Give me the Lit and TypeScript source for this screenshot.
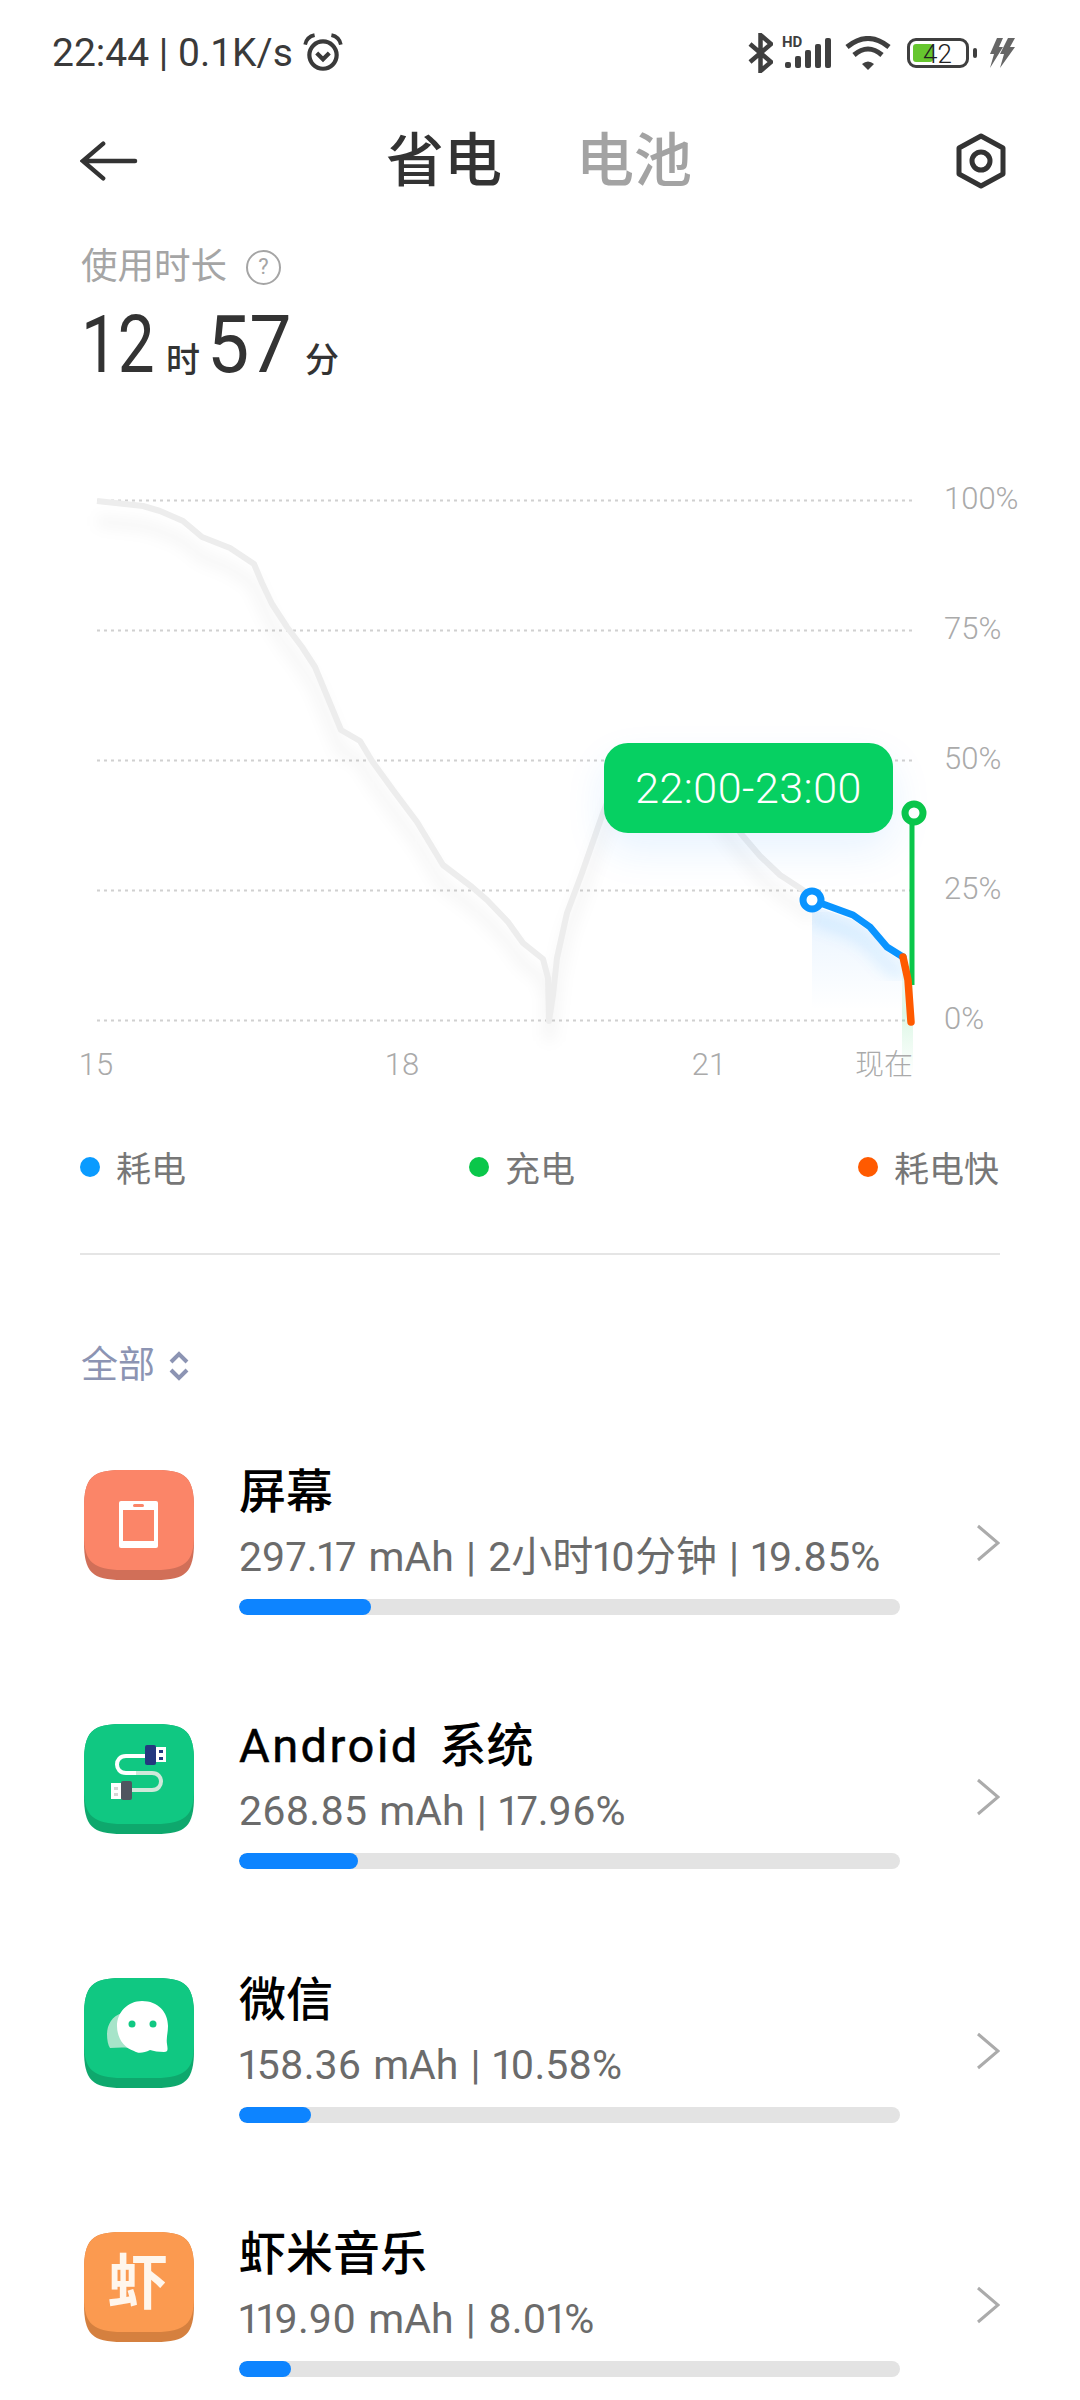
import { LitElement, css, html, svg } from "lit";
import { customElement } from "lit/decorators.js";

type Row = {
  name: unknown;
  detail: string;
  fill: number;
  icon: unknown;
};

const GREY_LINE =
  "M97 501 L143 506 L160 511 L183 521 L202 537 L230 548 L254 564 L262 583 L272 604 L287 627 L302 647 L315 667 L341 730 L360 741 L372 761 L393 790 L417 822 L443 865 L472 887 L487 900 L508 922 L523 943 L543 959 L548 978 L549 1021 L553 995 L557 958 L567 913 L582 873 L603 813 L620 770 L700 780 L742 835 L760 856 L780 875 L803 890 L812 900";
const BLUE_LINE = "M812 900 L853 915 L870 927 L887 947 L903 957";
const ORANGE_LINE = "M903 957 L908 980 L911 1022";

const GRID = [
  { y: 500.5, label: "100%" },
  { y: 630.5, label: "75%" },
  { y: 760.5, label: "50%" },
  { y: 890.5, label: "25%" },
  { y: 1020.5, label: "0%" },
];

const tile = (top: string, base: string, content: unknown) => html`
  <svg class="tile" viewBox="0 0 110 110">
    <path
      fill=${base}
      d="M0 38C0 8 8 0 38 0H72C102 0 110 8 110 38V72C110 102 102 110 72 110H38C8 110 0 102 0 72Z"
    />
    <path
      fill=${top}
      d="M0 38C0 8 8 0 38 0H72C102 0 110 8 110 38V66C110 92 100 100 72 100H38C10 100 0 92 0 66Z"
    />
    ${content}
  </svg>
`;

const ROWS: Row[] = [
  {
    name: "屏幕",
    detail: "297.17 mAh | 2小时10分钟 | 19.85%",
    fill: 132,
    icon: tile(
      "#fb8568",
      "#d16f58",
      svg`<rect x="35" y="31" width="39" height="47" rx="2" fill="#fff" />
        <rect x="39" y="40" width="31" height="31" fill="#fb8568" />
        <rect x="49" y="34" width="11" height="3" rx="1.5" fill="#fb8568" />`
    ),
  },
  {
    name: html`<span class="latin">Android</span> 系统`,
    detail: "268.85 mAh | 17.96%",
    fill: 119,
    icon: tile(
      "#10c882",
      "#0ea86d",
      svg`<path d="M62 32H42C30 32 30 49 42 49H52" fill="none" stroke="#fff" stroke-width="4" />
        <path d="M52 49H68C80 49 80 66 68 66H47" fill="none" stroke="#cfe8da" stroke-width="4" />
        <rect x="72" y="23" width="10" height="15" fill="#fff" />
        <rect x="61" y="21" width="11" height="20" rx="2" fill="#23397f" />
        <rect x="75" y="26" width="4" height="3" fill="#23397f" />
        <rect x="75" y="33" width="4" height="3" fill="#23397f" />
        <rect x="27" y="59" width="10" height="16" fill="#fff" />
        <rect x="37" y="57" width="11" height="19" rx="2" fill="#4f5560" />
        <rect x="30" y="63" width="4" height="3" fill="#d5d5d5" />
        <rect x="30" y="69" width="4" height="3" fill="#d5d5d5" />`
    ),
  },
  {
    name: "微信",
    detail: "158.36 mAh | 10.58%",
    fill: 72,
    icon: tile(
      "#10c882",
      "#0ea86d",
      svg`<path d="M38 35C28 38 23 47 23 56C23 62 24 67 26 70C32 70 38 69 44 70L56 72Z" fill="#a6e4c9" />
        <path d="M58 23C74 23 84 34 84 48C84 55 82 60 83 66C84 72 84 74 80 74C74 74 70 73 66 72C60 75 54 76 50 73C40 70 33 60 33 48C33 34 44 23 58 23Z" fill="#fff" />
        <circle cx="48" cy="46" r="3.5" fill="#10c882" />
        <circle cx="69" cy="46" r="3.5" fill="#10c882" />`
    ),
  },
  {
    name: "虾米音乐",
    detail: "119.90 mAh | 8.01%",
    fill: 52,
    icon: tile(
      "#fb9a50",
      "#d5803f",
      svg`<text x="54" y="72" text-anchor="middle" class="tile-glyph">虾</text>`
    ),
  },
];

@customElement("app-root")
export class AppRoot extends LitElement {
  private renderStatus() {
    return html`
      <div class="status">
        <div class="status-left">
          <span>22:44 | 0.1K/s</span>
          <svg class="alarm" viewBox="0 0 40 38" fill="none" stroke="#3a3a3a">
            <circle cx="20" cy="21" r="13" stroke-width="4" />
            <path d="M3 11C4 6 7 3 12 2M37 11C36 6 33 3 28 2" stroke-width="3.5" />
            <path d="M14 19L20 25L26 19" stroke-width="4" />
          </svg>
        </div>
        <div class="status-right">
          <svg class="bt" viewBox="0 0 25 40" fill="none" stroke="#3f3f3f" stroke-width="4.5">
            <path d="M2 11L23 29L12.5 38V2L23 11L2 29" />
          </svg>
          <div class="signal">
            <span class="hd">HD</span>
            <svg viewBox="0 0 47 30" fill="#3f3f3f">
              <rect x="0" y="24" width="6" height="6" rx="2" />
              <rect x="10" y="18" width="6" height="12" rx="2" />
              <rect x="20" y="12" width="6" height="18" rx="2" />
              <rect x="30" y="6" width="6" height="24" rx="2" />
              <rect x="40" y="0" width="6" height="30" rx="2" />
            </svg>
          </div>
          <svg class="wifi" viewBox="0 0 46 34" fill="none" stroke="#3f3f3f" stroke-width="5">
            <path d="M2 11Q23 -6 44 11" />
            <path d="M9 19Q23 7 37 19" />
            <path d="M23 34L17 28Q23 23 29 28Z" fill="#3f3f3f" stroke="none" />
          </svg>
          <div class="battery">
            <div class="battery-fill"></div>
            <span class="battery-text">42</span>
            <div class="battery-nub"></div>
          </div>
          <svg class="flash" viewBox="0 0 28 30" fill="#666">
            <path d="M9 0H15L11 9H15L2 30L6 16H2Z" />
            <path d="M20 0H27L22 9H27L12 30L16 16H12Z" />
          </svg>
        </div>
      </div>
    `;
  }

  private renderChart() {
    return html`
      <div class="chart">
        <svg viewBox="0 470 1080 650" width="1080" height="650">
          <defs>
            <linearGradient id="blueArea" x1="0" y1="0" x2="0" y2="1">
              <stop offset="0" stop-color="#1a8cff" stop-opacity="0.1" />
              <stop offset="1" stop-color="#1a8cff" stop-opacity="0" />
            </linearGradient>
            <linearGradient id="greenArea" x1="0" y1="0" x2="0" y2="1">
              <stop offset="0" stop-color="#0ac74a" stop-opacity="0" />
              <stop offset="0.5" stop-color="#0ac74a" stop-opacity="0.14" />
              <stop offset="1" stop-color="#0ac74a" stop-opacity="0" />
            </linearGradient>
            <filter id="soft" x="-10%" y="-10%" width="120%" height="120%">
              <feGaussianBlur stdDeviation="7" />
            </filter>
            <clipPath id="nowClip">
              <rect x="812" y="880" width="101" height="200" />
            </clipPath>
          </defs>
          ${GRID.map(
            (g) => svg`
              <line x1="97" x2="913" y1=${g.y} y2=${g.y} class="grid-line" />
              <text x="944" y=${g.y + 8} class="axis">${g.label}</text>
            `
          )}
          <path d=${GREY_LINE} class="shade" transform="translate(0 20)" filter="url(#soft)" />
          <g clip-path="url(#nowClip)">
            <path d="M812 905L853 920L870 932L887 952L903 962L912 1000V1010H812Z" fill="url(#blueArea)" />
            <path d=${BLUE_LINE} class="blue-shade" transform="translate(0 18)" filter="url(#soft)" />
            <rect x="902" y="950" width="11" height="125" fill="url(#greenArea)" />
          </g>
          <path d=${GREY_LINE} class="line grey" />
          <path d=${BLUE_LINE} class="line blue" />
          <line x1="912" x2="912" y1="813" y2="985" class="charge" />
          <path d=${ORANGE_LINE} class="line orange" />
          <circle cx="812" cy="900" r="9" class="node blue-node" />
          <circle cx="914" cy="813" r="9" class="node green-node" />
          <text x="96" y="1075" text-anchor="middle" class="axis">15</text>
          <text x="402" y="1075" text-anchor="middle" class="axis">18</text>
          <text x="709" y="1075" text-anchor="middle" class="axis">21</text>
          <text x="913" y="1075" text-anchor="end" class="axis now">现在</text>
        </svg>
        <div class="tooltip">22:00-23:00</div>
      </div>
    `;
  }

  private renderRow(r: Row) {
    return html`
      <div class="row">
        ${r.icon}
        <div class="row-main">
          <div class="row-name">${r.name}</div>
          <div class="row-detail">${r.detail}</div>
          <div class="track">
            <div class="track-fill" style="width:${r.fill}px"></div>
          </div>
        </div>
        <svg class="chev" viewBox="0 0 24 38" fill="none" stroke="#ababab" stroke-width="3">
          <path d="M2 2L22 19L2 36" />
        </svg>
      </div>
    `;
  }

  render() {
    return html`
      ${this.renderStatus()}
      <header class="nav">
        <svg class="back" viewBox="0 0 60 40" fill="none" stroke="#333" stroke-width="4.5" stroke-linecap="round">
          <path d="M24 2L3 20L24 38M3 20H57" />
        </svg>
        <div class="tabs">
          <span class="tab active">省电</span>
          <span class="tab">电池</span>
        </div>
        <svg class="gear" viewBox="0 0 50 56" fill="none" stroke="#333" stroke-width="5" stroke-linejoin="round">
          <path d="M25 3L47 15V41L25 53L3 41V15Z" />
          <circle cx="25" cy="28" r="9" />
        </svg>
      </header>
      <section class="usage">
        <div class="usage-label">
          使用时长
          <span class="help">?</span>
        </div>
        <div class="usage-value">
          <span class="num">12</span><span class="unit">时</span
          ><span class="num wide">57</span><span class="unit">分</span>
        </div>
      </section>
      ${this.renderChart()}
      <div class="legend">
        <div class="legend-item"><i class="dot" style="background:#0a9bff"></i>耗电</div>
        <div class="legend-item"><i class="dot" style="background:#0ac74a"></i>充电</div>
        <div class="legend-item"><i class="dot" style="background:#ff5a00"></i>耗电快</div>
      </div>
      <div class="divider"></div>
      <div class="filter">
        全部
        <svg viewBox="0 0 22 34" fill="none" stroke="#8c94b3" stroke-width="4">
          <path d="M3 13L11 5L19 13M3 21L11 29L19 21" />
        </svg>
      </div>
      <div class="rows">${ROWS.map((r) => this.renderRow(r))}</div>
    `;
  }

  static styles = css`
    :host {
      display: block;
      width: 1080px;
      height: 2400px;
      overflow: hidden;
      background: #fff;
      font-family: Roboto, "Noto Sans CJK SC", sans-serif;
    }
    .status {
      height: 106px;
      box-sizing: border-box;
      padding: 0 64px 0 52px;
      display: flex;
      align-items: center;
      justify-content: space-between;
      color: #3a3a3a;
    }
    .status-left {
      display: flex;
      align-items: center;
      gap: 9px;
      font-size: 39px;
    }
    .alarm {
      width: 42px;
      height: 40px;
    }
    .status-right {
      display: flex;
      align-items: center;
    }
    .bt {
      width: 25px;
      height: 40px;
      margin-right: 12px;
    }
    .signal {
      position: relative;
      width: 47px;
      height: 30px;
      margin-right: 13px;
    }
    .signal svg {
      display: block;
      width: 47px;
      height: 30px;
    }
    .hd {
      position: absolute;
      left: -3px;
      top: -3px;
      font-size: 15px;
      font-weight: 700;
      line-height: 15px;
      color: #3f3f3f;
    }
    .wifi {
      width: 46px;
      height: 34px;
      margin-right: 16px;
    }
    .battery {
      position: relative;
      width: 62px;
      height: 30px;
      box-sizing: border-box;
      border: 3.5px solid #3f3f3f;
      border-radius: 9px;
      margin-right: 19px;
    }
    .battery-fill {
      position: absolute;
      left: 3px;
      top: 3px;
      bottom: 3px;
      width: 20px;
      background: #66c62e;
      border-radius: 3px;
    }
    .battery-text {
      position: absolute;
      left: 13px;
      top: -2px;
      font-size: 26px;
      line-height: 30px;
      font-weight: 300;
      color: #222;
    }
    .battery-nub {
      position: absolute;
      right: -11px;
      top: 7px;
      width: 4px;
      height: 10px;
      background: #3f3f3f;
      border-radius: 2px;
    }
    .flash {
      width: 28px;
      height: 30px;
    }
    .nav {
      height: 110px;
      box-sizing: border-box;
      padding: 0 74px 0 80px;
      display: flex;
      align-items: center;
      justify-content: space-between;
    }
    .back {
      width: 58px;
      height: 40px;
    }
    .gear {
      width: 50px;
      height: 56px;
    }
    .tabs {
      display: flex;
      gap: 74px;
      margin-left: -16px;
    }
    .tab {
      font-size: 58px;
      line-height: 64px;
      font-weight: 500;
      color: #a3a3a3;
    }
    .tab.active {
      color: #333;
    }
    .usage {
      padding: 29px 0 0 81px;
      height: 254px;
      box-sizing: border-box;
    }
    .usage-label {
      display: flex;
      align-items: center;
      gap: 19px;
      font-size: 36.5px;
      line-height: 44px;
      color: #a5a5a5;
    }
    .help {
      box-sizing: border-box;
      width: 35px;
      height: 35px;
      border: 2.5px solid #a5a5a5;
      border-radius: 50%;
      font-size: 22px;
      line-height: 30px;
      text-align: center;
    }
    .usage-value {
      display: flex;
      align-items: baseline;
      margin-top: 11px;
      color: #333;
    }
    /* the original numerals are narrower than any installed face */
    .num {
      display: inline-block;
      width: 72px;
      font-size: 80px;
      line-height: 90px;
      transform: scaleX(0.82);
      transform-origin: left;
      white-space: nowrap;
    }
    .num.wide {
      width: 85px;
      margin-left: -6px;
      transform: scaleX(0.94);
    }
    .unit {
      font-size: 34px;
      font-weight: 500;
      margin: 0 13px;
    }
    .chart {
      position: relative;
      height: 650px;
    }
    .chart svg {
      display: block;
    }
    .grid-line {
      stroke: #d0d0d0;
      stroke-width: 2;
      stroke-dasharray: 3 4;
    }
    .axis {
      font-family: Roboto, "Noto Sans CJK SC", sans-serif;
      font-size: 31px;
      font-weight: 300;
      fill: #aaa;
    }
    .axis.now {
      font-size: 29px;
    }
    .line {
      fill: none;
      stroke-linejoin: round;
    }
    .grey {
      stroke: #ededed;
      stroke-width: 6;
    }
    .shade {
      fill: none;
      stroke: #000;
      stroke-opacity: 0.035;
      stroke-width: 12;
    }
    .blue-shade {
      fill: none;
      stroke: #1a8cff;
      stroke-opacity: 0.1;
      stroke-width: 14;
    }
    .blue {
      stroke: #0a94ff;
      stroke-width: 7;
      stroke-linecap: round;
    }
    .orange {
      stroke: #ff5a00;
      stroke-width: 7.5;
      stroke-linecap: round;
    }
    .charge {
      stroke: #0ac74a;
      stroke-width: 5;
    }
    .node {
      fill: #fff;
      stroke-width: 7;
    }
    .blue-node {
      stroke: #0a94ff;
    }
    .green-node {
      stroke: #0ac74a;
    }
    .tooltip {
      position: absolute;
      left: 604px;
      top: 273px;
      width: 289px;
      height: 90px;
      border-radius: 24px;
      background: #06d062;
      box-shadow: 0 18px 40px rgba(30, 140, 255, 0.1);
      color: #fff;
      font-size: 43px;
      font-weight: 300;
      letter-spacing: 0.5px;
      line-height: 90px;
      text-align: center;
    }
    .legend {
      height: 93px;
      padding: 0 81px 0 80px;
      display: flex;
      align-items: center;
      justify-content: space-between;
      box-sizing: border-box;
    }
    .legend-item {
      display: flex;
      align-items: center;
      gap: 16px;
      font-size: 35px;
      color: #777;
    }
    .dot {
      width: 20px;
      height: 20px;
      border-radius: 50%;
    }
    .divider {
      height: 2px;
      margin: 40px 80px 0;
      background: #e5e5e5;
    }
    .filter {
      margin: 89px 0 0 81px;
      display: flex;
      align-items: center;
      gap: 13px;
      font-size: 37px;
      line-height: 44px;
      color: #8c94b3;
    }
    .filter svg {
      width: 22px;
      height: 34px;
    }
    .rows {
      margin-top: 82px;
      padding-left: 84px;
    }
    .row {
      display: flex;
      align-items: flex-start;
      height: 254px;
    }
    .tile {
      width: 110px;
      height: 110px;
      flex: none;
    }
    .tile-glyph {
      font-family: "Noto Sans CJK SC", sans-serif;
      font-size: 60px;
      font-weight: 700;
      fill: #fff6ec;
    }
    .row-main {
      width: 661px;
      margin-left: 45px;
      margin-top: -6px;
    }
    .row-name {
      font-size: 47px;
      line-height: 56px;
      font-weight: 500;
      word-spacing: 8px;
      color: #000;
    }
    .latin {
      font-weight: 400;
      letter-spacing: 2.5px;
      -webkit-text-stroke: 0.5px #000;
    }
    .row-detail {
      margin-top: 9px;
      font-size: 41px;
      line-height: 56px;
      font-variant-numeric: proportional-nums;
      word-spacing: 2px;
      color: #6b6b6b;
    }
    .track {
      margin-top: 14px;
      height: 16px;
      border-radius: 8px;
      background: #e3e3e3;
      overflow: hidden;
    }
    .track-fill {
      height: 100%;
      border-radius: 8px;
      background: #0d84ff;
    }
    .chev {
      width: 24px;
      height: 38px;
      margin: 54px 0 0 76px;
    }
  `;
}

declare global {
  interface HTMLElementTagNameMap {
    "app-root": AppRoot;
  }
}
